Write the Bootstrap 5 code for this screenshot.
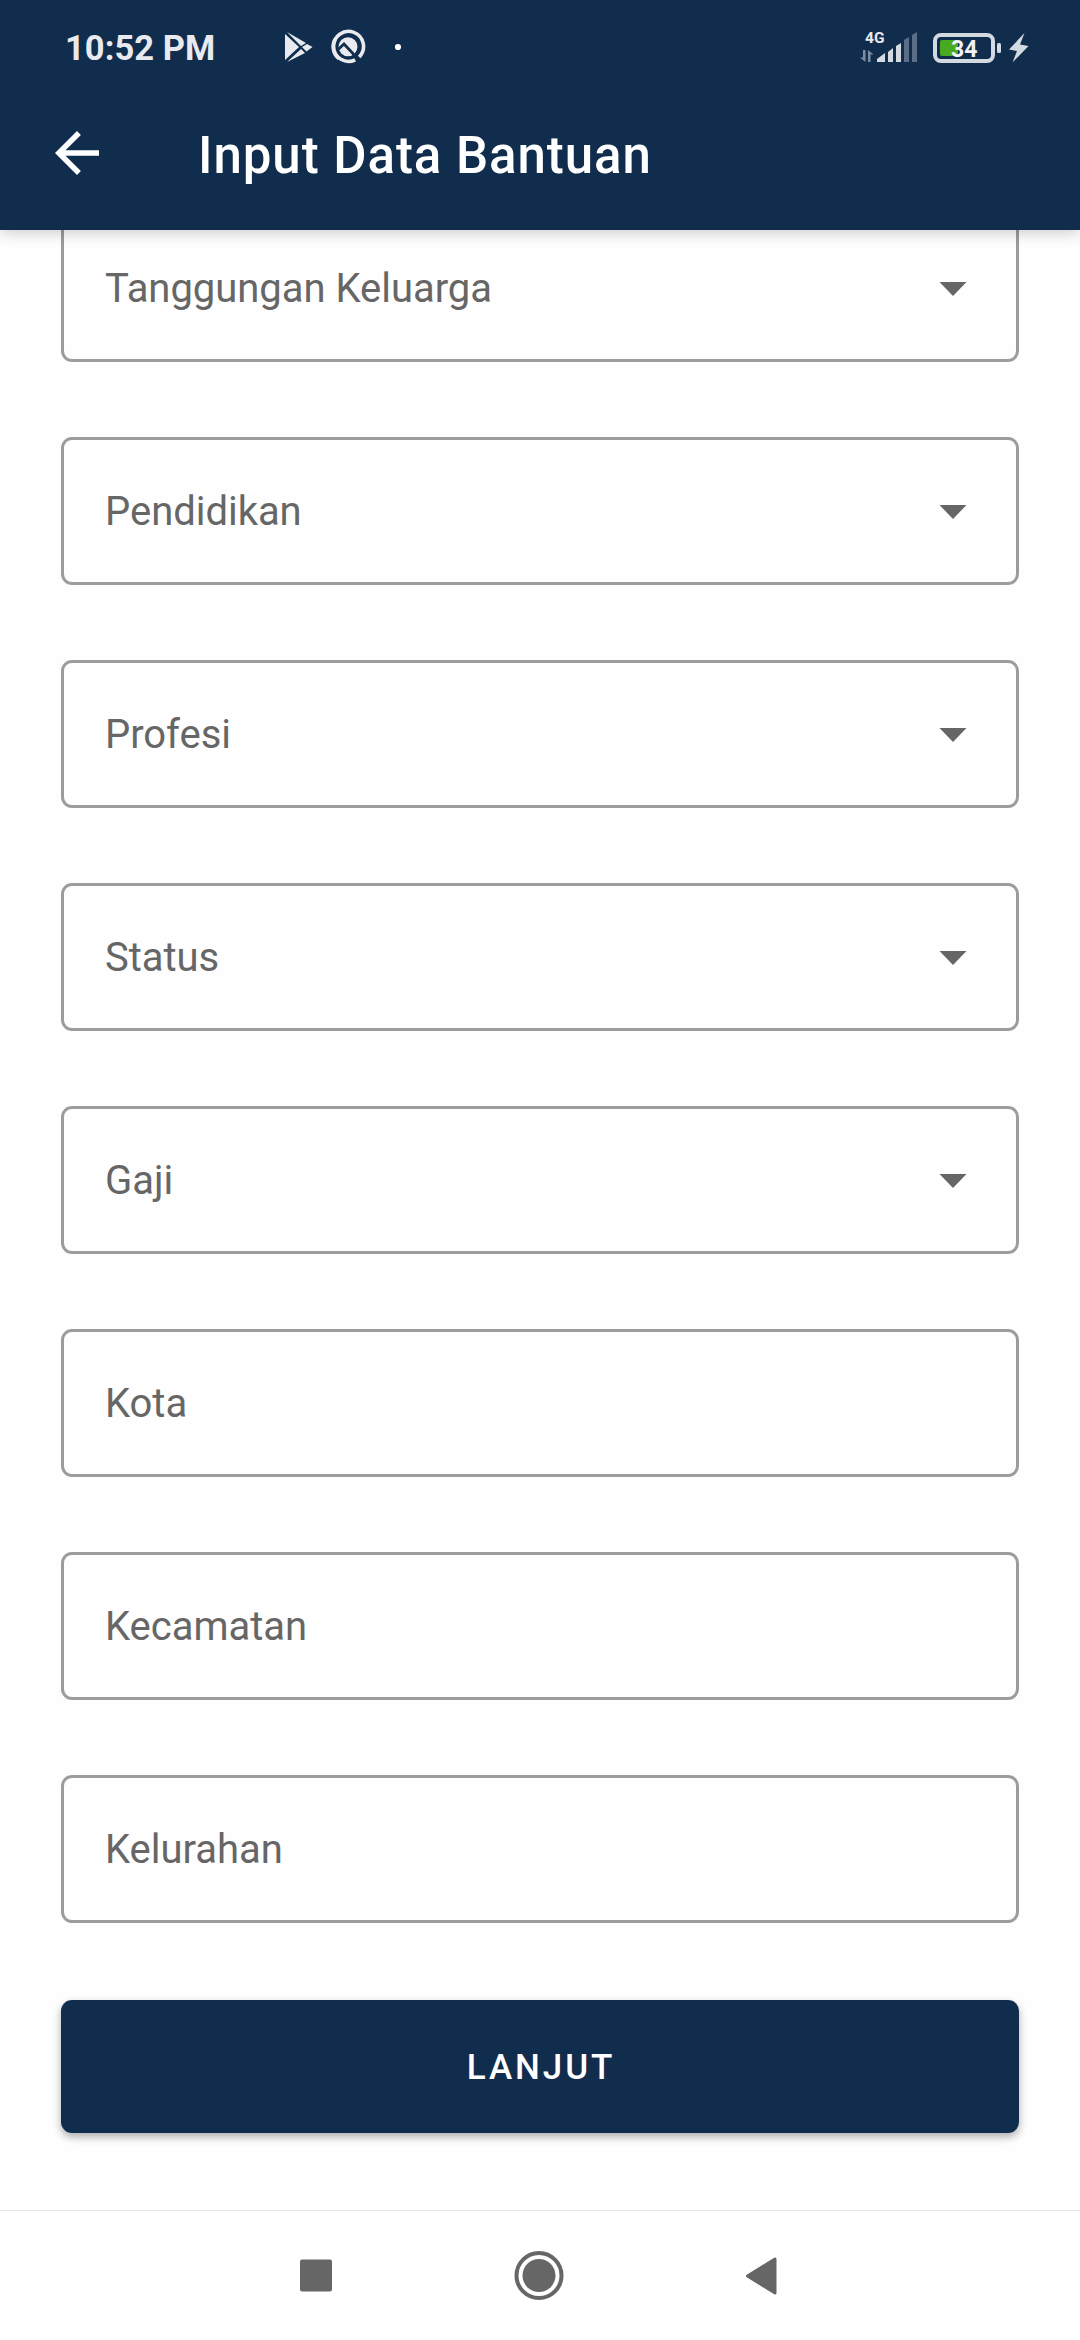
<!DOCTYPE html>
<html lang="id">
<head>
<meta charset="utf-8">
<meta name="viewport" content="width=device-width, initial-scale=1">
<title>Input Data Bantuan</title>
<link href="https://cdn.jsdelivr.net/npm/bootstrap@5.3.0/dist/css/bootstrap.min.css" rel="stylesheet">
<style>
:root{--navy:#112d4d;--hint:#666;--line:#9c9c9c}
html,body{height:2340px}
body{font-family:Roboto,"Liberation Sans",sans-serif;background:#fefefe;overflow:hidden}
svg{display:block;flex:none}
.app-top{height:230px;background:var(--navy);box-shadow:0 3px 14px rgba(0,0,0,.2);z-index:2}
.status-bar{height:94px;padding:0 50px 0 65px;color:#e8eaef}
.clock{font-size:34.500px;font-weight:700;line-height:40px;letter-spacing:.05px;width:220px;padding-top:1px;white-space:nowrap}
.toolbar{height:118px;padding-left:44px}
.toolbar h1{font-size:51px;font-weight:500;line-height:60px;letter-spacing:.95px;margin:6px 0 0 88px;white-space:nowrap}
.form-area{padding:0 61px;margin-top:-16px;gap:75px}
.field{height:148px;border:3px solid var(--line);border-radius:11px;padding:2px 49px 0 41px;color:var(--hint);font-size:40px;line-height:48px;letter-spacing:-.03px}
.btn-next{height:133px;margin-top:2px;padding:4px 0 0 2px;border-radius:11px;background:var(--navy);font-size:35px;font-weight:500;letter-spacing:2.9px;box-shadow:0 4px 8px rgba(0,0,0,.32)}
.nav-keys{height:130px;border-top:1px solid #e3e3e3;padding:0 299px 0 300px}
</style>
<script src="https://cdn.jsdelivr.net/npm/bootstrap@5.3.0/dist/js/bootstrap.bundle.min.js"></script>
</head>
<body class="d-flex flex-column">
<header class="app-top position-relative flex-shrink-0 text-white">
  <div class="status-bar d-flex align-items-center">
    <span class="clock">10:52 PM</span>
    <svg width="120" height="36" viewBox="285 29 120 36" fill="#e8eaef">
      <path d="M285 34v26l14-13zM287 32l19 11-5 3zM287 62l14-13 4 4zM307 44l5.500 3-6 4.500-4.500-4.500z"/>
      <path d="M355.200 59.800a15 15 0 1 1 4-2.900" fill="none" stroke="#e8eaef" stroke-width="3.600"/>
      <circle cx="348" cy="46.700" r="9.500"/>
      <path d="M336.500 51l7.500-7 15.500 16.500" fill="none" stroke="#112d4d" stroke-width="2.800"/>
      <path d="M339 58.700a15 15 0 0 1-4-19" fill="none" stroke="#e8eaef" stroke-width="3.600"/>
      <circle cx="398" cy="47" r="3.100" fill="#fff"/>
    </svg>
    <svg class="ms-auto" width="170" height="36" viewBox="860 29 170 36">
      <text x="865" y="42.700" font-size="15.500" font-weight="700" fill="#e8eaef">4G</text>
      <g fill="#7c8da2"><path d="M863 50h2.500v12L860 57.500h3zM868 62h2.500v-7.500h3L868 50z"/></g>
      <g fill="#d4dae1"><path d="M877 62v-3l8-6v9zM888 62V52l5-4v14zM896 62V46l5-3v19z"/></g>
      <g fill="#5c6e86"><path d="M904 62V40l5-3v25zM912 62V35l5-3v30z"/></g>
      <rect x="935" y="35" width="58" height="26" rx="6" fill="none" stroke="#d4dae1" stroke-width="4"/>
      <path d="M942 40h16v16h-16a2 2 0 0 1-2-2V42a2 2 0 0 1 2-2z" fill="#48aa20"/>
      <rect x="997" y="43" width="4" height="10" rx="1.500" fill="#d4dae1"/>
      <text x="951" y="57" font-size="23" font-weight="700" fill="#f1f3f6">34</text>
      <path d="M1024.500 33L1009 49.500l8 1.500-4.500 11.500L1028.500 46l-8.500-1.500z" fill="#d4dae1"/>
    </svg>
  </div>
  <div class="toolbar d-flex align-items-center">
    <svg width="66" height="66" viewBox="0 0 24 24" fill="#fff"><path d="M20 11H7.830l5.590-5.590L12 4l-8 8 8 8 1.410-1.410L7.830 13H20z"/></svg>
    <h1>Input Data Bantuan</h1>
  </div>
</header>
<main class="form-area d-flex flex-column flex-grow-1">
  <div class="field d-flex align-items-center justify-content-between"><span>Tanggungan Keluarga</span><svg width="28" height="14" viewBox="0 0 28 14"><path d="M.5 0h27L14 14z" fill="#666"/></svg></div>
  <div class="field d-flex align-items-center justify-content-between"><span>Pendidikan</span><svg width="28" height="14" viewBox="0 0 28 14"><path d="M.5 0h27L14 14z" fill="#666"/></svg></div>
  <div class="field d-flex align-items-center justify-content-between"><span>Profesi</span><svg width="28" height="14" viewBox="0 0 28 14"><path d="M.5 0h27L14 14z" fill="#666"/></svg></div>
  <div class="field d-flex align-items-center justify-content-between"><span>Status</span><svg width="28" height="14" viewBox="0 0 28 14"><path d="M.5 0h27L14 14z" fill="#666"/></svg></div>
  <div class="field d-flex align-items-center justify-content-between"><span>Gaji</span><svg width="28" height="14" viewBox="0 0 28 14"><path d="M.5 0h27L14 14z" fill="#666"/></svg></div>
  <div class="field d-flex align-items-center"><span>Kota</span></div>
  <div class="field d-flex align-items-center"><span>Kecamatan</span></div>
  <div class="field d-flex align-items-center"><span>Kelurahan</span></div>
  <button type="button" class="btn btn-next border-0 w-100 text-white">LANJUT</button>
</main>
<nav class="nav-keys d-flex flex-shrink-0 align-items-center justify-content-between bg-white">
  <svg width="32" height="50" viewBox="0 0 32 50"><rect y="8.500" width="32" height="32" rx="2" fill="#666"/></svg>
  <svg width="50" height="50" viewBox="0 0 50 50"><circle cx="25" cy="24.500" r="22.500" fill="none" stroke="#666" stroke-width="4"/><circle cx="25" cy="24.500" r="16.500" fill="#666"/></svg>
  <svg width="35" height="50" viewBox="0 0 35 50"><path d="M1.500 25L29 8v34z" fill="#666" stroke="#666" stroke-width="3" stroke-linejoin="round"/></svg>
</nav>
</body>
</html>
